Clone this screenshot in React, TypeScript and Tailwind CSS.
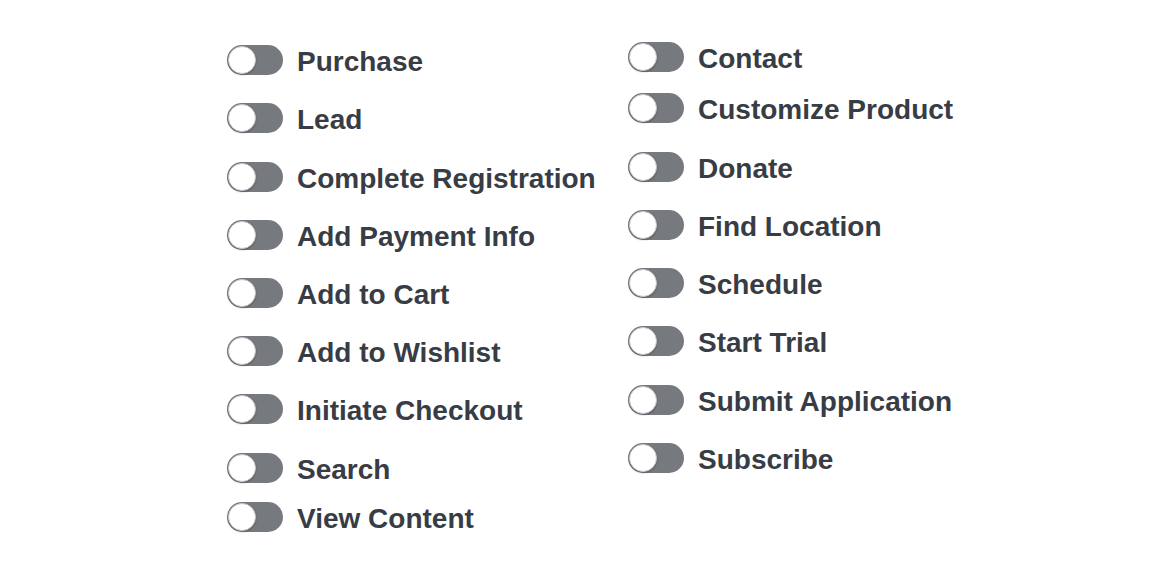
import React from 'react'

type Item = { label: string; mt: string }

const left: Item[] = [
  { label: 'Purchase', mt: 'mt-0' },
  { label: 'Lead', mt: 'mt-[28px]' },
  { label: 'Complete Registration', mt: 'mt-[29px]' },
  { label: 'Add Payment Info', mt: 'mt-[28px]' },
  { label: 'Add to Cart', mt: 'mt-[28px]' },
  { label: 'Add to Wishlist', mt: 'mt-[28px]' },
  { label: 'Initiate Checkout', mt: 'mt-[28px]' },
  { label: 'Search', mt: 'mt-[29px]' },
  { label: 'View Content', mt: 'mt-[19px]' },
]

const right: Item[] = [
  { label: 'Contact', mt: 'mt-0' },
  { label: 'Customize Product', mt: 'mt-[21px]' },
  { label: 'Donate', mt: 'mt-[29px]' },
  { label: 'Find Location', mt: 'mt-[28px]' },
  { label: 'Schedule', mt: 'mt-[28px]' },
  { label: 'Start Trial', mt: 'mt-[28px]' },
  { label: 'Submit Application', mt: 'mt-[29px]' },
  { label: 'Subscribe', mt: 'mt-[28px]' },
]

function Toggle() {
  return (
    <div className="relative w-[56px] h-[30px] rounded-full bg-[#76797d] shrink-0">
      <div className="absolute left-[1px] top-[1px] w-[28px] h-[28px] rounded-full bg-white border border-[#c4c6c9] shadow-[0_1px_2px_rgba(0,0,0,0.25)]" />
    </div>
  )
}

function Row({ item }: { item: Item }) {
  return (
    <div className={`flex items-center h-[30px] ${item.mt}`}>
      <Toggle />
      <span className="ml-[14px] translate-y-[2px] text-[28px] font-bold leading-none text-[#383c44] whitespace-nowrap">
        {item.label}
      </span>
    </div>
  )
}

export default function App() {
  return (
    <div
      className="w-[1169px] h-[570px] bg-white flex pl-[227px]"
      style={{ fontFamily: '"Liberation Sans", Arial, sans-serif' }}
    >
      <div className="w-[401px] flex flex-col pt-[45px]">
        {left.map((it) => (
          <Row key={it.label} item={it} />
        ))}
      </div>
      <div className="flex flex-col pt-[42px]">
        {right.map((it) => (
          <Row key={it.label} item={it} />
        ))}
      </div>
    </div>
  )
}
